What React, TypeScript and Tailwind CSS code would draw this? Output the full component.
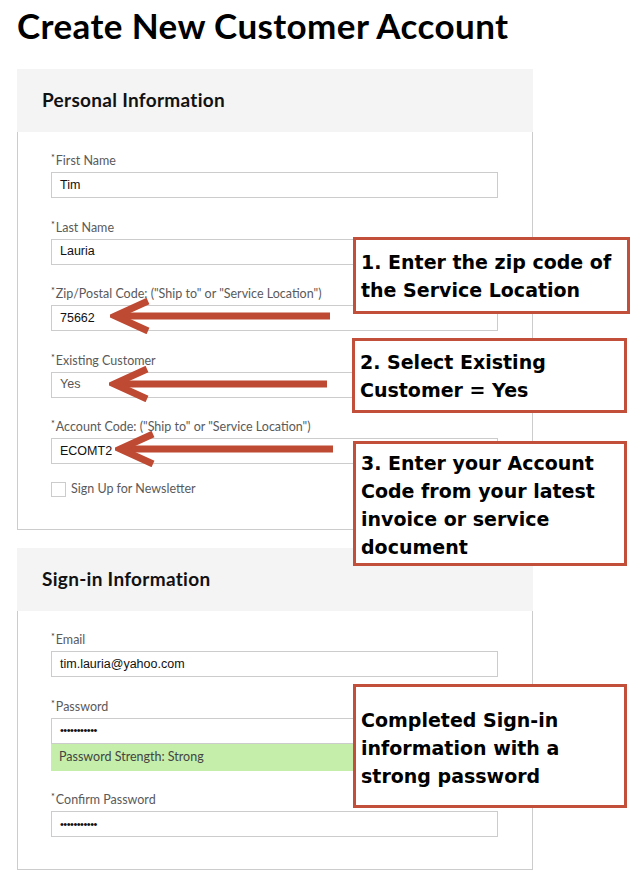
const ui = "font-['Lato','Open_Sans',sans-serif]";
const plain = "font-['Liberation_Sans',Arial,sans-serif]";

function Label({ text }: { text: string }) {
  return (
    <div className={`${ui} flex h-[16px] items-start overflow-hidden text-[12.5px] leading-[16px] text-[#5a5a5a]`}>
      <span className="mr-[1px] text-[9px] leading-[10px] text-[#333]">*</span>
      <span>{text}</span>
    </div>
  );
}

function Field({ label, value, muted, dots }: { label: string; value: string; muted?: boolean; dots?: boolean }) {
  return (
    <div className="flex flex-col gap-[3px]">
      <Label text={label} />
      <div
        className={`${plain} flex h-[26px] w-[447px] items-center border border-[#cccccc] bg-white pl-[8px] ${
          dots ? "text-[11px] tracking-[-0.5px]" : "text-[12.5px]"
        } ${muted ? "text-[#555]" : "text-[#111]"}`}
      >
        {value}
      </div>
    </div>
  );
}

function Section({ title, children }: { title: string; children: React.ReactNode }) {
  return (
    <section className="w-[516px]">
      <div className="flex h-[63px] items-center bg-[#f4f4f4] pl-[25px]">
        <h2 className={`${ui} text-[19px] font-bold tracking-[0.3px] text-[#111]`}>{title}</h2>
      </div>
      <div className="flex flex-col gap-[21.5px] border-x border-b border-[#cccccc] pb-[32px] pl-[33px] pt-[21px]">
        {children}
      </div>
    </section>
  );
}

function Arrow({ className, length }: { className: string; length: number }) {
  return (
    <svg className={`pointer-events-none absolute ${className}`} width={length} height={36} viewBox={`0 0 ${length} 36`}>
      <line x1={8} y1={18} x2={length} y2={18} stroke="#be4a33" strokeWidth={7} />
      <polyline points="38,3 5,18 38,33" fill="none" stroke="#be4a33" strokeWidth={7} strokeLinejoin="miter" />
    </svg>
  );
}

function Callout({ className, children }: { className: string; children: React.ReactNode }) {
  return (
    <div
      className={`absolute border-[3px] border-[#c24f3a] bg-white px-[5px] font-['DejaVu_Sans',Verdana,sans-serif] text-[19px] font-bold leading-[28px] text-black ${className}`}
    >
      {children}
    </div>
  );
}

export default function App() {
  return (
    <div className="relative h-[883px] w-[640px] overflow-hidden bg-white px-[17px] pt-[2px]">
      <h1 className={`${ui} text-[35px] font-bold leading-[46px] tracking-[0.4px] text-black`}>
        Create New Customer Account
      </h1>

      <div className="mt-[21px] flex flex-col gap-[18px]">
        <Section title="Personal Information">
          <Field label="First Name" value="Tim" />
          <Field label="Last Name" value="Lauria" />
          <Field label={'Zip/Postal Code: ("Ship to" or "Service Location")'} value="75662" />
          <Field label="Existing Customer" value="Yes" muted />
          <Field label={'Account Code: ("Ship to" or "Service Location")'} value="ECOMT2" />
          <label className={`${ui} -mt-[3.5px] flex h-[15px] items-center gap-[5px] text-[12.5px] text-[#5a5a5a]`}>
            <span className="h-[15px] w-[15px] border border-[#cccccc] bg-white" />
            Sign Up for Newsletter
          </label>
        </Section>

        <Section title="Sign-in Information">
          <Field label="Email" value="tim.lauria@yahoo.com" />
          <div className="flex flex-col">
            <Field label="Password" value="•••••••••••" dots />
            <div className={`${ui} flex h-[27px] w-[447px] items-center bg-[#c5eeaa] pl-[8px] text-[12.5px] text-[#444]`}>
              Password Strength: Strong
            </div>
          </div>
          <Field label="Confirm Password" value="•••••••••••" dots />
        </Section>
      </div>

      <Arrow className="left-[110px] top-[298px]" length={220} />
      <Arrow className="left-[109px] top-[366px]" length={218} />
      <Arrow className="left-[115px] top-[431px]" length={218} />

      <Callout className="left-[353px] top-[237px] h-[77px] w-[277px] pt-[8px]">
        1. Enter the zip code of the Service Location
      </Callout>
      <Callout className="left-[352px] top-[338px] h-[75px] w-[275px] pt-[7px]">
        2. Select Existing Customer = Yes
      </Callout>
      <Callout className="left-[353px] top-[441px] h-[125px] w-[274px] pt-[5px]">
        3. Enter your Account Code from your latest invoice or service document
      </Callout>
      <Callout className="left-[353px] top-[684px] h-[124px] w-[274px] pt-[19px]">
        Completed Sign-in information with a strong password
      </Callout>
    </div>
  );
}
